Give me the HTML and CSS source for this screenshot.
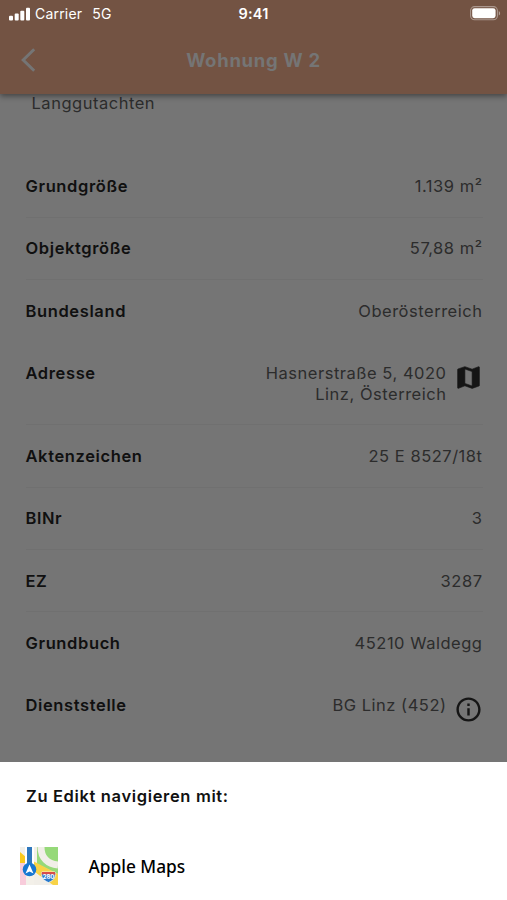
FILE: index.html
```
<!DOCTYPE html>
<html lang="de">
<head>
  <meta charset="UTF-8">
  <meta name="viewport" content="width=device-width, initial-scale=1.0">
  <title>Wohnung W 2</title>
  <link rel="stylesheet" href="styles.css">
</head>
<body>
  <header class="header">
    <div class="status-bar">
      <div class="carrier">
        <svg class="signal" width="22" height="14" viewBox="0 0 22 14" fill="#fff">
          <rect x="0" y="8.7" width="4" height="4.8" rx="1"/>
          <rect x="5.7" y="6.5" width="4" height="7" rx="1"/>
          <rect x="11.3" y="3.7" width="4" height="9.8" rx="1"/>
          <rect x="17" y="0.7" width="4" height="12.8" rx="1"/>
        </svg>
        <span class="carrier-name">Carrier</span>
        <span class="network">5G</span>
      </div>
      <div class="time">9:41</div>
      <svg class="battery" width="31" height="15" viewBox="0 0 31 15">
        <rect x="0.6" y="0.6" width="26.8" height="13.2" rx="4" fill="none" stroke="#fff" stroke-opacity="0.4" stroke-width="1.1"/>
        <rect x="2.2" y="2.2" width="23.4" height="10" rx="2.4" fill="#fff"/>
        <path d="M28.8 5v4.6c1.8-.8 1.8-3.8 0-4.6z" fill="#fff" fill-opacity="0.45"/>
      </svg>
    </div>
    <div class="nav">
      <svg class="back" width="18" height="24" viewBox="0 0 18 24" fill="none" stroke="#757575" stroke-width="3">
        <path d="M14.2 1.2L3.2 12l11 10.8"/>
      </svg>
      <h1>Wohnung W 2</h1>
    </div>
  </header>

  <main class="details">
    <p class="kind">Langgutachten</p>
    <div class="row"><span class="label">Grundgröße</span><span class="value">1.139 m²</span></div>
    <div class="row"><span class="label">Objektgröße</span><span class="value">57,88 m²</span></div>
    <div class="row no-line"><span class="label">Bundesland</span><span class="value">Oberösterreich</span></div>
    <div class="row">
      <span class="label">Adresse</span>
      <span class="value">Hasnerstraße 5, 4020<br>Linz, Österreich</span>
      <svg class="icon" width="29" height="29" viewBox="0 0 24 24" fill="#151515" stroke="#151515" stroke-width="0.5">
        <path d="M20.5 3l-.16.03L15 5.1 9 3 3.36 4.9c-.21.07-.36.25-.36.48V20.5c0 .28.22.5.5.5l.16-.03L9 18.9l6 2.1 5.64-1.9c.21-.07.36-.25.36-.48V3.5c0-.28-.22-.5-.5-.5zM15 19l-6-2.11V5l6 2.11V19z"/>
      </svg>
    </div>
    <div class="row"><span class="label">Aktenzeichen</span><span class="value">25 E 8527/18t</span></div>
    <div class="row"><span class="label">BlNr</span><span class="value">3</span></div>
    <div class="row"><span class="label">EZ</span><span class="value">3287</span></div>
    <div class="row no-line"><span class="label">Grundbuch</span><span class="value">45210 Waldegg</span></div>
    <div class="row no-line">
      <span class="label">Dienststelle</span>
      <span class="value">BG Linz (452)</span>
      <svg class="icon" width="29" height="29" viewBox="0 0 24 24" fill="#151515">
        <path d="M11 7h2v2h-2zm0 4h2v6h-2zm1-9C6.48 2 2 6.48 2 12s4.48 10 10 10 10-4.48 10-10S17.52 2 12 2zm0 18c-4.41 0-8-3.59-8-8s3.59-8 8-8 8 3.59 8 8-3.59 8-8 8z"/>
      </svg>
    </div>
  </main>

  <section class="sheet">
    <h2>Zu Edikt navigieren mit:</h2>
    <div class="app">
      <svg width="38" height="38" viewBox="0 0 38 38">
        <rect width="38" height="38" fill="#f3f0e9"/>
        <path d="M17 0h21v27L17 17z" fill="#96d979"/>
        <path d="M21 0c0 11 7 17 17 18" fill="none" stroke="#f1eee8" stroke-width="7"/>
        <path d="M0 5l7 6v9H0z" fill="#fbc91c"/>
        <path d="M0 16h6v22H0z" fill="#f8ccdb"/>
        <path d="M13 14l25 13v11h-5L13 24z" fill="#f8d347"/>
        <path d="M14 24l16 14H14z" fill="#f1eee8"/>
        <rect x="5" width="9" height="24" fill="#fff"/>
        <rect x="7" width="5" height="18" fill="#2f78bd"/>
        <circle cx="9.5" cy="22.5" r="6.8" fill="#1677d2"/>
        <path d="M9.5 17.5l4 9-4-2-4 2z" fill="#fff"/>
        <path d="M22 25h13c1 4 0 8-6.5 10.5C22 33 21 29 22 25z" fill="#2879cc" stroke="#fff" stroke-width="0.7"/>
        <path d="M22 25h13l.4 2.5H21.6z" fill="#d84d4b"/>
        <text class="shield" x="28.5" y="32.3" text-anchor="middle">280</text>
      </svg>
      <span>Apple Maps</span>
    </div>
  </section>
</body>
</html>
```
FILE: styles.css
```
* { box-sizing: border-box; }
body {
  margin: 0;
  height: 900px;
  display: flex;
  flex-direction: column;
  overflow: hidden;
  background: #757575;
  font-family: Inter, "Liberation Sans", sans-serif;
  font-size: 16.5px;
  letter-spacing: 0.52px;
  color: #2c2c2c;
}

/* Kopfbereich */
.header {
  position: relative;
  flex: none;
  height: 94px;
  background: #735343;
  box-shadow: 0 2px 6px rgba(0,0,0,0.45);
}
.status-bar {
  display: grid;
  grid-template-columns: 1fr auto 1fr;
  align-items: center;
  height: 27px;
  padding: 0 6px 0 9px;
  color: #fff;
  font-size: 14px;
  letter-spacing: 0.2px;
}
.carrier { display: flex; align-items: center; }
.carrier-name { margin-left: 4px; }
.network { margin-left: 10px; }
.time { margin-right: 3px; font-size: 14.5px; font-weight: 600; }
.battery { justify-self: end; }
.nav {
  display: grid;
  grid-template-columns: 60px 1fr 60px;
  align-items: center;
  height: 65px;
}
.back { margin-left: 20px; }
h1 { margin: 0; text-align: center; font-size: 18.5px; font-weight: 700; letter-spacing: 0.7px; color: #757575; }

/* Eigenschaften */
.details { flex: 1; min-height: 0; overflow: hidden; padding: 0 24.5px 0 25.5px; }
.kind { height: 61.4px; margin: 0; padding-left: 6px; line-height: 19px; }
.row {
  display: flex;
  align-items: flex-start;
  padding: 20.7px 0 19.95px;
  border-bottom: 1px solid #707070;
  line-height: 20.7px;
}
.row.no-line { border-color: transparent; }
.label { flex: 1; font-weight: 600; letter-spacing: 0.62px; color: #101010; }
.value { text-align: right; }
.icon { margin: 0 0 -10px 7px; }

/* Auswahl der Karten-App */
.sheet { flex: none; height: 138px; padding: 24px 20px 0; background: #fff; color: #111; }
h2 { margin: 0 0 41px 6px; line-height: 20px; font-size: 16.5px; font-weight: 600; letter-spacing: 0.65px; }
.app { display: flex; align-items: center; gap: 30.5px; font-family: "Noto Sans", sans-serif; font-size: 17.3px; font-weight: 500; letter-spacing: 0; color: #000; }
.shield { font: 700 6px Inter, sans-serif; letter-spacing: 0; fill: #fff; }
```
